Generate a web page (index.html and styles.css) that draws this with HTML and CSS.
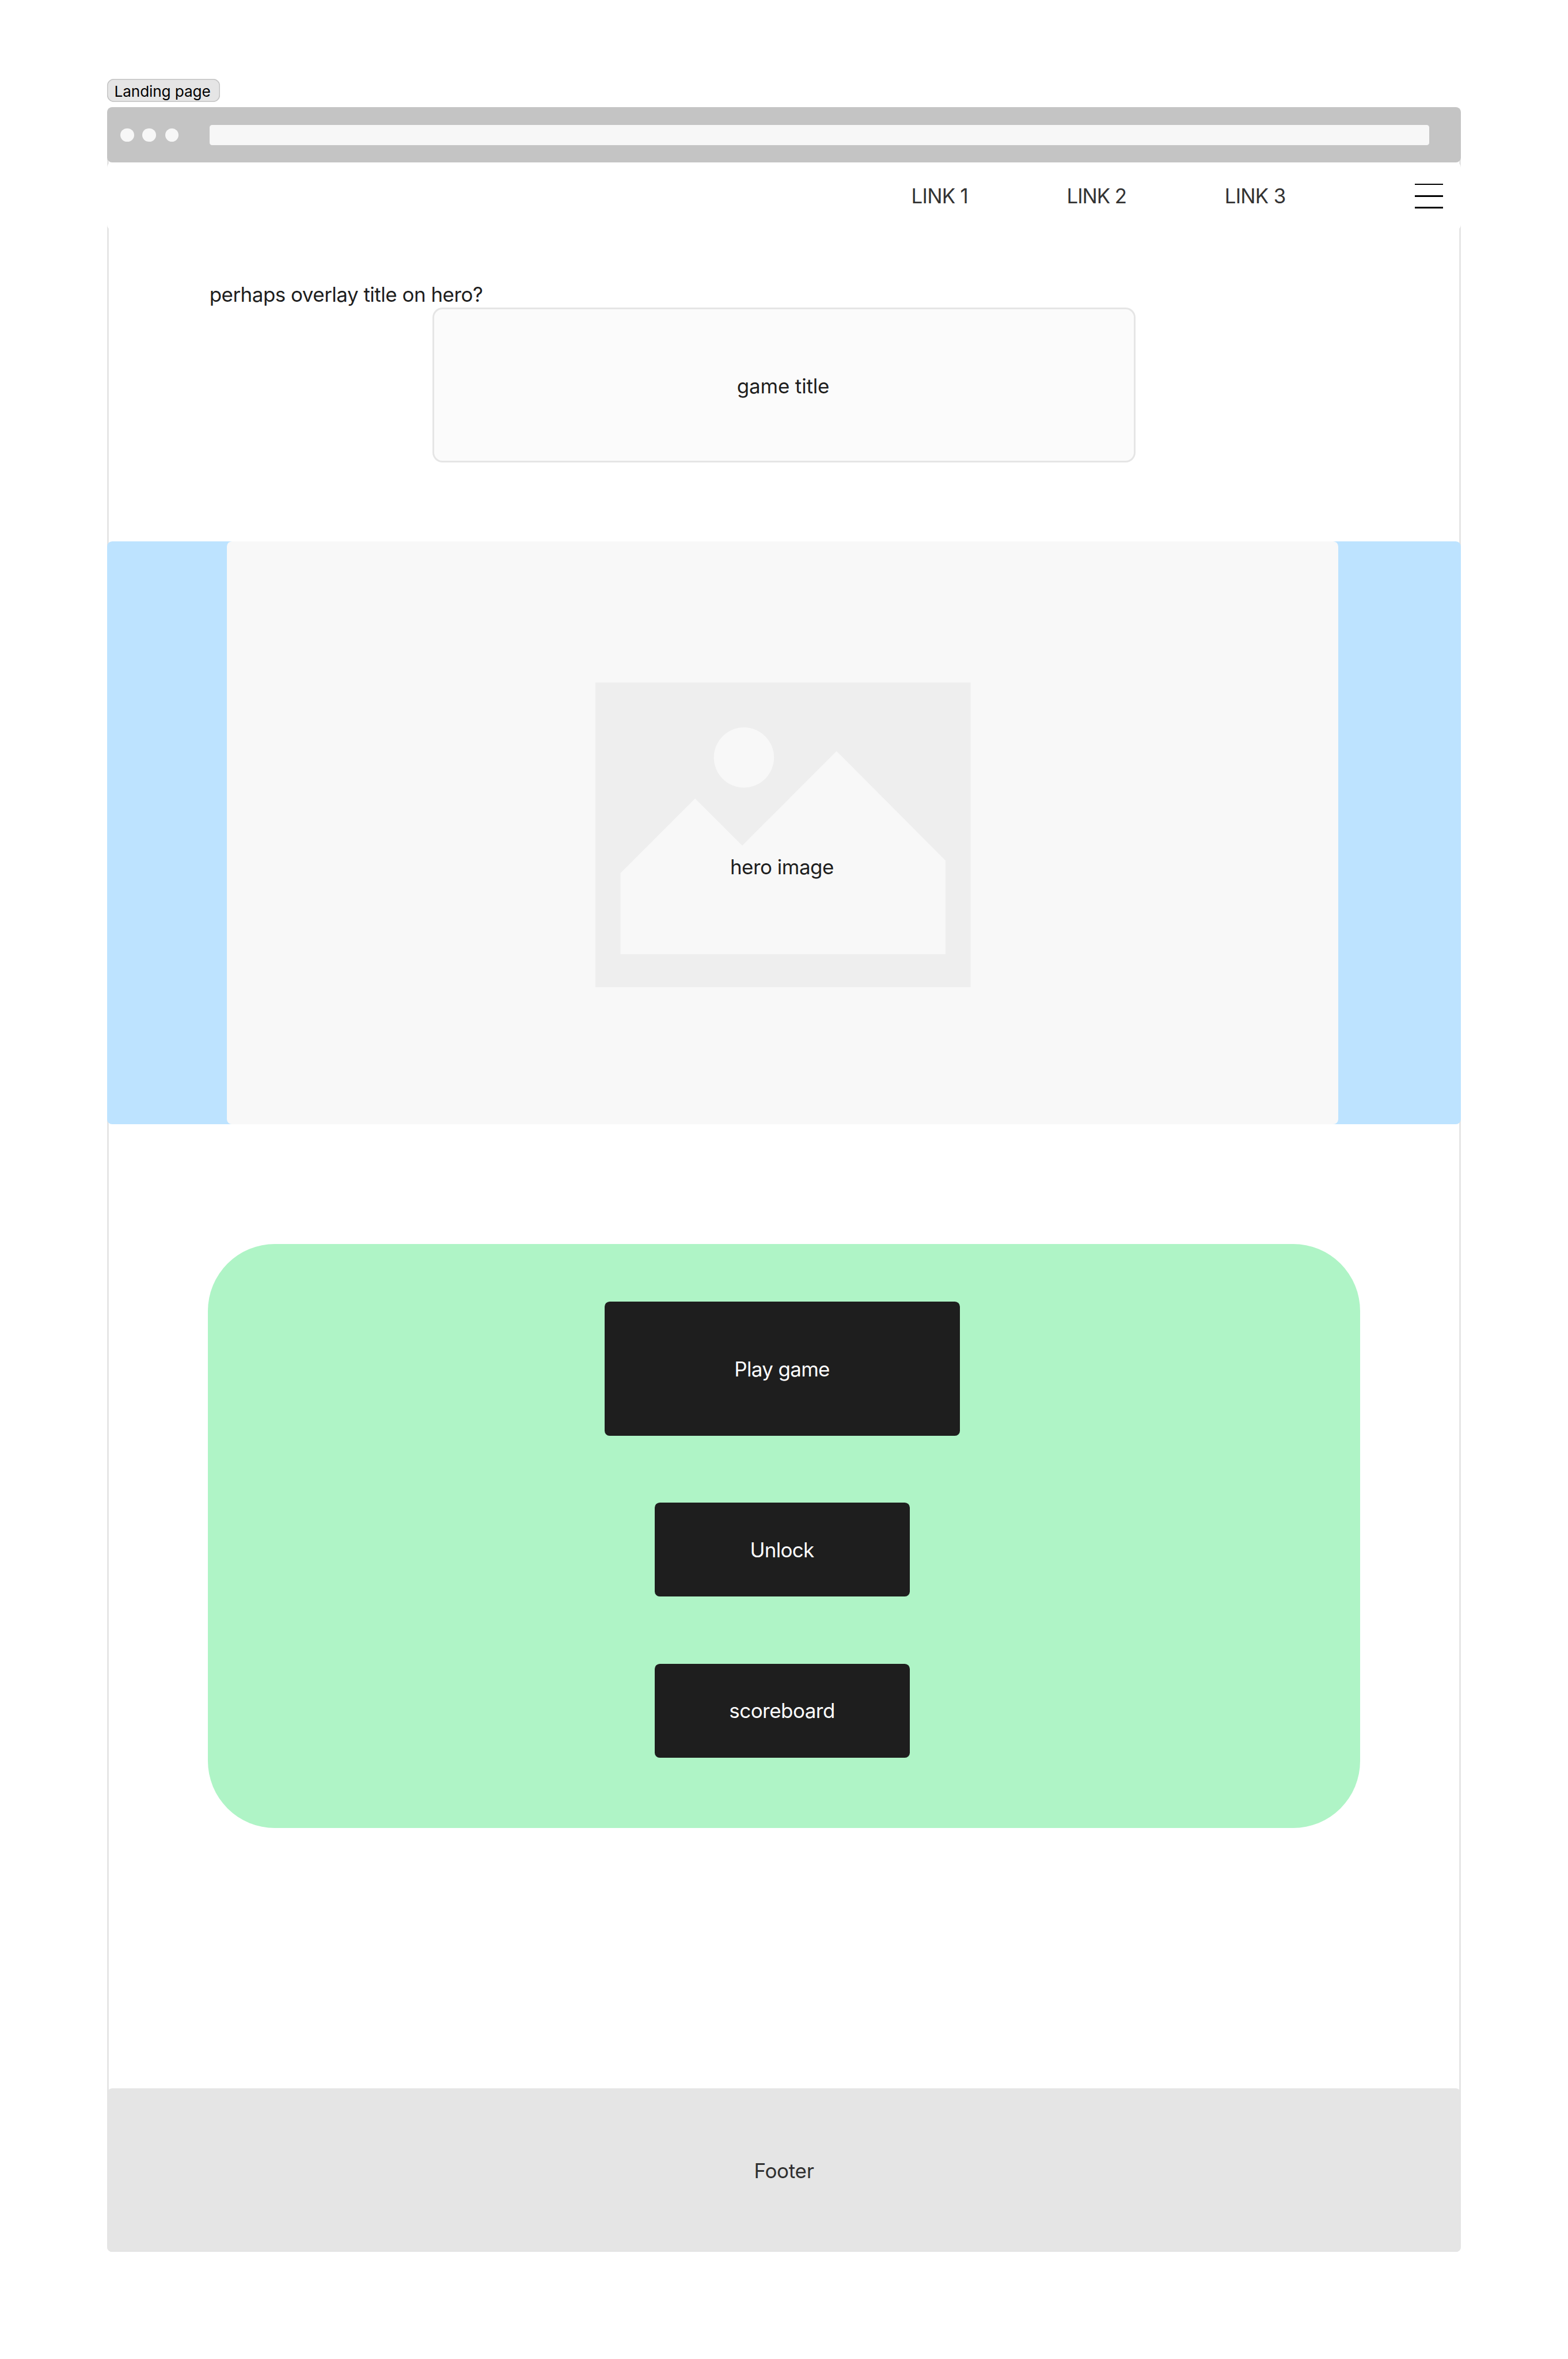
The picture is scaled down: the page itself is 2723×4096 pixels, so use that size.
FILE: index.html
```
<!DOCTYPE html>
<html lang="en">
<head>
<meta charset="utf-8">
<title>Landing page</title>
<link rel="stylesheet" href="styles.css">
</head>
<body>
<div class="board">
  <div class="tag">Landing page</div>
  <div class="frame">
    <div class="chrome">
      <span class="dot"></span><span class="dot"></span><span class="dot dot-last"></span>
      <span class="address"></span>
    </div>
    <nav class="nav">
      <a class="link link-1">LINK 1</a>
      <a class="link link-2">LINK 2</a>
      <a class="link link-3">LINK 3</a>
      <div class="burger"><span class="bar"></span><span class="bar"></span><span class="bar"></span></div>
    </nav>
    <section class="intro">
      <p class="note">perhaps overlay title on hero?</p>
      <h1 class="title">game title</h1>
    </section>
    <section class="hero">
      <div class="hero-media">
        <svg class="picture" viewBox="0 0 896 728" preserveAspectRatio="none">
          <rect width="896" height="728" fill="#eeeeee"/>
          <circle cx="354.6" cy="179.2" r="71.8" fill="#f8f8f8"/>
          <path d="M60 455.2 238 277.1 350.5 389.4 575.8 163.9 836 425.1V648.8H60Z" fill="#f8f8f8"/>
        </svg>
        <span class="hero-text">hero image</span>
      </div>
    </section>
    <section class="actions">
      <button class="btn btn-play">Play game</button>
      <button class="btn btn-unlock">Unlock</button>
      <button class="btn">scoreboard</button>
    </section>
    <footer class="footer">Footer</footer>
  </div>
</div>
</body>
</html>
```
FILE: styles.css
```
:root {
  --u: 0.7273px;
}

* {
  box-sizing: border-box;
  margin: 0;
  padding: 0;
}

body {
  background: #fff;
  color: #1e1e1e;
  font-family: Inter, "Liberation Sans", sans-serif;
  font-size: calc(48 * var(--u));
  font-weight: 400;
  line-height: calc(58 * var(--u));
  letter-spacing: calc(-0.66 * var(--u));
}

.board {
  width: 2723px;
  height: 4096px;
  overflow: hidden;
  padding: calc(188 * var(--u)) calc(256 * var(--u)) 0;
}

.tag {
  width: calc(269 * var(--u));
  height: calc(56 * var(--u));
  margin-bottom: calc(12 * var(--u));
  padding: calc(9 * var(--u)) 0 0 calc(17 * var(--u));
  border-radius: calc(16 * var(--u));
  background: #e5e5e5;
  box-shadow: inset 0 0 0 calc(2 * var(--u)) #c4c4c4;
  color: #000;
  font-size: calc(36 * var(--u));
  line-height: calc(44 * var(--u));
  letter-spacing: calc(-0.17 * var(--u));
  white-space: nowrap;
}

.frame {
  height: calc(5120 * var(--u));
  display: flex;
  flex-direction: column;
  border-radius: calc(12 * var(--u));
  background: #fff;
  box-shadow: inset 0 0 0 calc(4 * var(--u)) #e5e5e5;
}

/* Browser bar */
.chrome {
  height: calc(132 * var(--u));
  flex: none;
  display: flex;
  align-items: center;
  gap: calc(20 * var(--u));
  padding: 0 calc(76 * var(--u)) 0 calc(32 * var(--u));
  border-radius: calc(12 * var(--u));
  background: #c4c4c4;
}

.dot {
  width: calc(32 * var(--u));
  height: calc(32 * var(--u));
  border-radius: 50%;
  background: #f7f7f7;
}

.dot-last {
  margin-left: calc(2 * var(--u));
}

.address {
  flex: 1;
  height: calc(48 * var(--u));
  margin-left: calc(54 * var(--u));
  border-radius: calc(6 * var(--u));
  background: #f7f7f7;
}

/* Navigation */
.nav {
  height: calc(160 * var(--u));
  flex: none;
  display: flex;
  align-items: center;
  justify-content: flex-end;
  padding-right: calc(42 * var(--u));
  border-radius: calc(12 * var(--u));
  background: #fff;
}

.link {
  color: #333;
  white-space: nowrap;
}

.link-1 {
  margin-right: calc(235.7 * var(--u));
  letter-spacing: calc(-1 * var(--u));
}

.link-2 {
  margin-right: calc(234.5 * var(--u));
  letter-spacing: calc(-1.46 * var(--u));
}

.link-3 {
  margin-right: calc(308.4 * var(--u));
  letter-spacing: calc(-1 * var(--u));
}

.burger {
  display: flex;
  flex-direction: column;
  gap: calc(24 * var(--u));
}

.bar {
  width: calc(68 * var(--u));
  height: calc(4 * var(--u));
  background: #000;
}

/* Title */
.intro {
  height: calc(744 * var(--u));
  flex: none;
  padding-top: calc(126 * var(--u));
}

.note {
  height: calc(60 * var(--u));
  padding-left: calc(244 * var(--u));
}

.title {
  width: calc(1680 * var(--u));
  height: calc(370 * var(--u));
  margin: 0 auto;
  padding: calc(4 * var(--u)) calc(4 * var(--u)) 0 0;
  display: grid;
  place-items: center;
  border-radius: calc(24 * var(--u));
  background: #fbfbfb;
  box-shadow: inset 0 0 0 calc(4 * var(--u)) #e5e5e5;
  font-size: inherit;
  font-weight: inherit;
  letter-spacing: calc(-0.17 * var(--u));
}

/* Hero */
.hero {
  height: calc(1392 * var(--u));
  flex: none;
  padding-left: calc(286 * var(--u));
  border-radius: calc(12 * var(--u));
  background: #bde3ff;
}

.hero-media {
  width: calc(2654 * var(--u));
  height: 100%;
  display: grid;
  justify-items: center;
  align-items: start;
  padding-top: calc(337 * var(--u));
  border-radius: calc(12 * var(--u));
  background: #f8f8f8;
}

.picture,
.hero-text {
  grid-area: 1 / 1;
}

.picture {
  width: calc(896 * var(--u));
  height: calc(728 * var(--u));
  margin-left: calc(2 * var(--u));
}

.hero-text {
  margin-top: calc(411 * var(--u));
  padding-right: calc(4 * var(--u));
}

/* Buttons */
.actions {
  width: calc(2752 * var(--u));
  height: calc(1394 * var(--u));
  flex: none;
  margin: calc(286 * var(--u)) auto 0;
  padding: calc(138 * var(--u)) calc(8 * var(--u)) 0 0;
  display: flex;
  flex-direction: column;
  align-items: center;
  gap: calc(160 * var(--u));
  border-radius: calc(160 * var(--u));
  background: #aff4c6;
}

.btn {
  width: calc(608 * var(--u));
  height: calc(224 * var(--u));
  padding-right: calc(1.5 * var(--u));
  border: 0;
  border-radius: calc(12 * var(--u));
  background: #1e1e1e;
  color: #fff;
  font: inherit;
  letter-spacing: inherit;
}

.btn-play {
  width: calc(848 * var(--u));
  height: calc(320 * var(--u));
  letter-spacing: calc(-0.86 * var(--u));
}

.btn-unlock {
  letter-spacing: calc(-0.94 * var(--u));
}

.footer {
  height: calc(390 * var(--u));
  flex: none;
  margin-top: auto;
  padding-top: calc(2 * var(--u));
  display: grid;
  place-items: center;
  border-radius: calc(12 * var(--u));
  background: #e5e5e5;
  color: #303030;
  letter-spacing: calc(-0.34 * var(--u));
}
```
